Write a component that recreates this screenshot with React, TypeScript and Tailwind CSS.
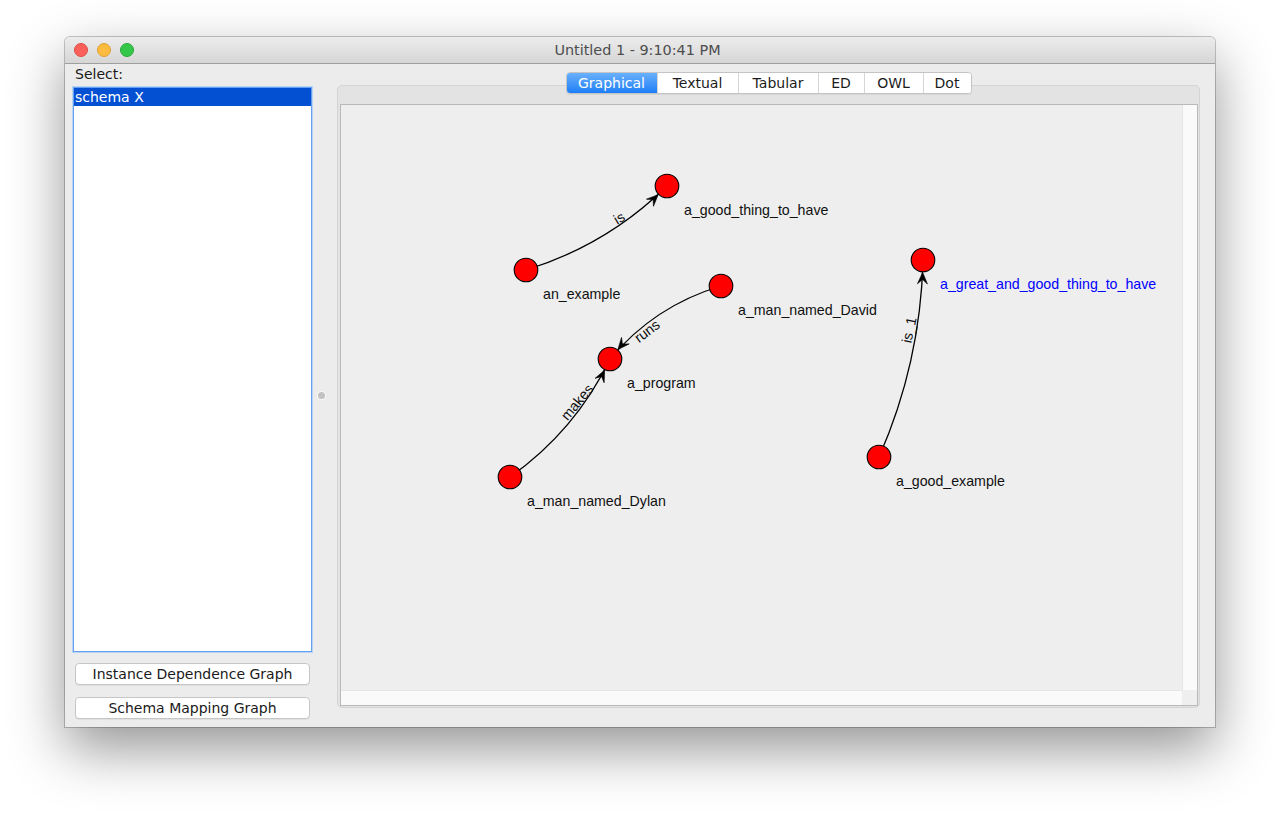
import React from "react";

type Node = { x: number; y: number; label: string; blue?: boolean };
const nodes: Node[] = [
  { x: 667, y: 186, label: "a_good_thing_to_have" },
  { x: 526, y: 270, label: "an_example" },
  { x: 721, y: 286, label: "a_man_named_David" },
  { x: 610, y: 359, label: "a_program" },
  { x: 510, y: 477, label: "a_man_named_Dylan" },
  { x: 923, y: 260, label: "a_great_and_good_thing_to_have", blue: true },
  { x: 879, y: 457, label: "a_good_example" },
];

const edges = [
  { a: 1, b: 0, label: "is", lx: 619, ly: 218, rot: -31 },
  { a: 2, b: 3, label: "runs", lx: 647, ly: 331, rot: -37 },
  { a: 4, b: 3, label: "makes", lx: 577, ly: 402, rot: -50 },
  { a: 6, b: 5, label: "is_1", lx: 909, ly: 330, rot: -78 },
];

const R = 11.8;

function Graph() {
  return (
    <svg width={841} height={585} viewBox="341 105 841 585" className="block">
      {edges.map((e, i) => {
        const A = nodes[e.a];
        const B = nodes[e.b];
        const dx = B.x - A.x;
        const dy = B.y - A.y;
        const len = Math.hypot(dx, dy);
        const c = dx / len;
        const s = dy / len;
        const px = -s;
        const py = c;
        const cx = (A.x + B.x) / 2 + 20 * px;
        const cy = (A.y + B.y) / 2 + 20 * py;
        const tx = B.x - cx;
        const ty = B.y - cy;
        const tl = Math.hypot(tx, ty);
        const ux = tx / tl;
        const uy = ty / tl;
        const tipX = B.x - ux * (R + 0.6);
        const tipY = B.y - uy * (R + 0.6);
        const ang = (Math.atan2(uy, ux) * 180) / Math.PI;
        return (
          <g key={i}>
            <path
              d={`M${A.x},${A.y} Q${cx},${cy} ${B.x},${B.y}`}
              fill="none"
              stroke="#000"
              strokeWidth={1.3}
            />
            <path
              d="M0,0 L-11.5,-5 L-7,0 L-11.5,5 Z"
              fill="#000"
              stroke="#000"
              strokeWidth={0.6}
              strokeLinejoin="round"
              transform={`translate(${tipX},${tipY}) rotate(${ang})`}
            />
            <text
              x={e.lx}
              y={e.ly}
              textAnchor="middle"
              dominantBaseline="central"
              transform={`rotate(${e.rot} ${e.lx} ${e.ly})`}
              fontFamily="'Liberation Sans', Arial, sans-serif"
              fontSize={14.2}
              fill="#111"
            >
              {e.label}
            </text>
          </g>
        );
      })}
      {nodes.map((n, i) => (
        <g key={i}>
          <circle cx={n.x} cy={n.y} r={R} fill="#ff0000" stroke="#000" strokeWidth={1.1} />
          <text
            x={n.x + 17}
            y={n.y + 29}
            fontFamily="'Liberation Sans', Arial, sans-serif"
            fontSize={14.2}
            fill={n.blue ? "#0000ff" : "#111"}
          >
            {n.label}
          </text>
        </g>
      ))}
    </svg>
  );
}

const tabs: { label: string; cls: string; sel?: boolean }[] = [
  { label: "Graphical", cls: "w-[90px]", sel: true },
  { label: "Textual", cls: "w-[81px] border-l border-[#d6d6d6]" },
  { label: "Tabular", cls: "w-[80px] border-l border-[#d6d6d6]" },
  { label: "ED", cls: "w-[46px] border-l border-[#d6d6d6]" },
  { label: "OWL", cls: "w-[59px] border-l border-[#d6d6d6]" },
  { label: "Dot", cls: "w-[48px] border-l border-[#d6d6d6]" },
];

export default function App() {
  return (
    <div className="w-[1280px] h-[820px] bg-white pt-[37px] pl-[65px] font-['DejaVu_Sans','Noto_Sans',sans-serif] text-[14px] text-[#1c1c1c]">
      <div className="w-[1150px] h-[690px] flex flex-col rounded-t-[5px] bg-[#ececec] shadow-[0_0_0_1px_rgba(0,0,0,0.22),0_22px_55px_rgba(0,0,0,0.42)]">
        {/* title bar */}
        <div className="relative h-[27px] flex items-center rounded-t-[5px] bg-linear-to-b from-[#ececec] to-[#d6d6d6] border-b border-[#9f9f9f]">
          <div className="flex items-center gap-[9px] pl-[9px]">
            <div className="w-[14px] h-[14px] rounded-full bg-[#fc605b] border border-[#dd4b45]" />
            <div className="w-[14px] h-[14px] rounded-full bg-[#fdbc40] border border-[#dea034]" />
            <div className="w-[14px] h-[14px] rounded-full bg-[#34c84a] border border-[#27a836]" />
          </div>
          <div className="flex-1 text-center text-[14.4px] text-[#4d4d4d] pr-[74px] leading-none">
            Untitled 1 - 9:10:41 PM
          </div>
        </div>
        {/* content */}
        <div className="flex-1 flex">
          {/* left column */}
          <div className="w-[249px] pl-[8px] flex flex-col">
            <div className="h-[23px] pl-[2px] leading-[20px] text-[#1a1a1a]">Select:</div>
            <div className="w-[239px] h-[565px] bg-white border border-[#64a2f0] shadow-[0_0_0_1px_#b7d3f7] ">
              <div className="h-[18px] bg-[#0350d3] text-white pl-[1px] leading-[18px]">schema X</div>
            </div>
            <div className="mt-[11px] ml-[2px] w-[235px] h-[22px] rounded-[4px] bg-white border border-[#c6c6c6] shadow-[0_1px_0_rgba(0,0,0,0.05)] flex items-center justify-center text-[#1a1a1a]">
              Instance Dependence Graph
            </div>
            <div className="mt-[12px] ml-[2px] w-[235px] h-[22px] rounded-[4px] bg-white border border-[#c6c6c6] shadow-[0_1px_0_rgba(0,0,0,0.05)] flex items-center justify-center text-[#1a1a1a]">
              Schema Mapping Graph
            </div>
          </div>
          {/* splitter */}
          <div className="w-[23px] flex items-center">
            <div className="ml-[4px] w-[7px] h-[7px] rounded-full bg-[#c2c2c2] shadow-[0_0_0_1px_#f7f7f7]" />
          </div>
          {/* right: tabbed pane */}
          <div className="flex-1 flex flex-col pt-[8px] pr-[15px] pb-[19px]">
            <div className="relative z-10 flex justify-center">
              <div className="flex h-[22px] rounded-[4px] border border-[#c4c4c4] bg-white overflow-hidden shadow-[0_1px_1px_rgba(0,0,0,0.06)]">
                {tabs.map((t) => (
                  <div
                    key={t.label}
                    className={
                      t.cls +
                      " flex items-center justify-center " +
                      (t.sel
                        ? "bg-linear-to-b from-[#68b0fb] to-[#1a7ef6] text-white"
                        : "bg-white text-[#1c1c1c]")
                    }
                  >
                    {t.label}
                  </div>
                ))}
              </div>
            </div>
            <div className="-mt-[9px] flex-1 flex flex-col rounded-[5px] border border-[#d4d4d4] bg-[#e3e3e3] pt-[18px] pl-[2px] pr-[1px] pb-[1px]">
              <div className="flex-1 flex flex-col border border-[#b9b9b9] bg-[#eeeeee] shadow-[inset_1px_1px_0_#fafafa]">
                <div className="flex-1 flex">
                  <div className="flex-1 overflow-hidden bg-[#eeeeee]">
                    <Graph />
                  </div>
                  <div className="w-[15px] bg-[#fafafa] border-l border-[#e6e6e6]" />
                </div>
                <div className="h-[15px] flex">
                  <div className="flex-1 bg-[#fafafa] border-t border-[#e6e6e6]" />
                  <div className="w-[15px] bg-[#efefef]" />
                </div>
              </div>
            </div>
          </div>
        </div>
      </div>
    </div>
  );
}
